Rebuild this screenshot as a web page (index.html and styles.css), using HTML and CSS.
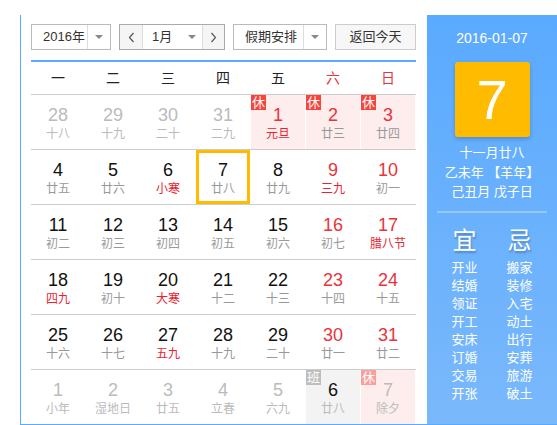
FILE: index.html
```html
<!DOCTYPE html>
<html lang="zh-CN">
<head>
<meta charset="utf-8">
<title>万年历</title>
<link rel="stylesheet" href="styles.css">
</head>
<body>
<div class="calendar">
  <div class="main">
    <div class="toolbar">
      <div class="select year"><span class="sel-text">2016年</span><span class="sel-arrow"><i class="tri"></i></span></div>
      <div class="month-group">
        <span class="nav prev"><svg width="7" height="11" viewBox="0 0 7 11"><polyline points="5.5,1 1.5,5.5 5.5,10" fill="none" stroke="#555" stroke-width="1.2"/></svg></span>
        <span class="month"><span class="month-text">1月</span><i class="tri"></i></span>
        <span class="nav next"><svg width="7" height="11" viewBox="0 0 7 11"><polyline points="1.5,1 5.5,5.5 1.5,10" fill="none" stroke="#555" stroke-width="1.2"/></svg></span>
      </div>
      <div class="select holiday"><span class="sel-text">假期安排</span><span class="sel-arrow"><i class="tri"></i></span></div>
      <span class="today">返回今天</span>
    </div>
    <div class="grid">
      <div class="week">
        <span>一</span><span>二</span><span>三</span><span>四</span><span>五</span><span class="red">六</span><span class="red">日</span>
      </div>
      <div class="row">
        <div class="cell out"><div class="num">28</div><div class="lunar">十八</div></div>
        <div class="cell out"><div class="num">29</div><div class="lunar">十九</div></div>
        <div class="cell out"><div class="num">30</div><div class="lunar">二十</div></div>
        <div class="cell out"><div class="num">31</div><div class="lunar">二九</div></div>
        <div class="cell hol wk"><span class="badge">休</span><div class="num">1</div><div class="lunar fest">元旦</div></div>
        <div class="cell hol wk"><span class="badge">休</span><div class="num">2</div><div class="lunar">廿三</div></div>
        <div class="cell hol wk"><span class="badge">休</span><div class="num">3</div><div class="lunar">廿四</div></div>
      </div>
      <div class="row">
        <div class="cell"><div class="num">4</div><div class="lunar">廿五</div></div>
        <div class="cell"><div class="num">5</div><div class="lunar">廿六</div></div>
        <div class="cell"><div class="num">6</div><div class="lunar fest">小寒</div></div>
        <div class="cell sel"><div class="num">7</div><div class="lunar">廿八</div></div>
        <div class="cell"><div class="num">8</div><div class="lunar">廿九</div></div>
        <div class="cell wk"><div class="num">9</div><div class="lunar fest">三九</div></div>
        <div class="cell wk"><div class="num">10</div><div class="lunar">初一</div></div>
      </div>
      <div class="row">
        <div class="cell"><div class="num">11</div><div class="lunar">初二</div></div>
        <div class="cell"><div class="num">12</div><div class="lunar">初三</div></div>
        <div class="cell"><div class="num">13</div><div class="lunar">初四</div></div>
        <div class="cell"><div class="num">14</div><div class="lunar">初五</div></div>
        <div class="cell"><div class="num">15</div><div class="lunar">初六</div></div>
        <div class="cell wk"><div class="num">16</div><div class="lunar">初七</div></div>
        <div class="cell wk"><div class="num">17</div><div class="lunar fest">腊八节</div></div>
      </div>
      <div class="row">
        <div class="cell"><div class="num">18</div><div class="lunar fest">四九</div></div>
        <div class="cell"><div class="num">19</div><div class="lunar">初十</div></div>
        <div class="cell"><div class="num">20</div><div class="lunar fest">大寒</div></div>
        <div class="cell"><div class="num">21</div><div class="lunar">十二</div></div>
        <div class="cell"><div class="num">22</div><div class="lunar">十三</div></div>
        <div class="cell wk"><div class="num">23</div><div class="lunar">十四</div></div>
        <div class="cell wk"><div class="num">24</div><div class="lunar">十五</div></div>
      </div>
      <div class="row">
        <div class="cell"><div class="num">25</div><div class="lunar">十六</div></div>
        <div class="cell"><div class="num">26</div><div class="lunar">十七</div></div>
        <div class="cell"><div class="num">27</div><div class="lunar fest">五九</div></div>
        <div class="cell"><div class="num">28</div><div class="lunar">十九</div></div>
        <div class="cell"><div class="num">29</div><div class="lunar">二十</div></div>
        <div class="cell wk"><div class="num">30</div><div class="lunar">廿一</div></div>
        <div class="cell wk"><div class="num">31</div><div class="lunar">廿二</div></div>
      </div>
      <div class="row">
        <div class="cell out"><div class="num">1</div><div class="lunar">小年</div></div>
        <div class="cell out"><div class="num">2</div><div class="lunar">湿地日</div></div>
        <div class="cell out"><div class="num">3</div><div class="lunar">廿五</div></div>
        <div class="cell out"><div class="num">4</div><div class="lunar">立春</div></div>
        <div class="cell out"><div class="num">5</div><div class="lunar">六九</div></div>
        <div class="cell out workday"><span class="badge ban">班</span><div class="num">6</div><div class="lunar">廿八</div></div>
        <div class="cell out hol"><span class="badge faded">休</span><div class="num">7</div><div class="lunar">除夕</div></div>
      </div>
    </div>
  </div>
  <div class="panel">
    <div class="pdate">2016-01-07</div>
    <div class="bigday">7</div>
    <div class="lunarinfo">
      <div>十一月廿八</div>
      <div>乙未年 【羊年】</div>
      <div>己丑月 戊子日</div>
    </div>
    <div class="divider"></div>
    <div class="yiji">
      <div class="col">
        <div class="yj-title">宜</div>
        <div>开业</div><div>结婚</div><div>领证</div><div>开工</div><div>安床</div><div>订婚</div><div>交易</div><div>开张</div>
      </div>
      <div class="col">
        <div class="yj-title">忌</div>
        <div>搬家</div><div>装修</div><div>入宅</div><div>动土</div><div>出行</div><div>安葬</div><div>旅游</div><div>破土</div>
      </div>
    </div>
  </div>
</div>
</body>
</html>
```

FILE: styles.css
```css
html, body {
  margin: 0;
  padding: 0;
  background: #fff;
  overflow: hidden;
}

body {
  font-family: "Liberation Sans", "Noto Sans CJK SC", sans-serif;
  color: #111;
}

.calendar {
  display: flex;
  margin: 15px 0 0 20px;
  width: 537px;
  height: 410px;
  box-sizing: border-box;
  border-left: 1px solid #5aabff;
  border-bottom: 1px solid #5aabff;
}

.main {
  width: 406px;
  padding: 9px 0 0 10px;
  box-sizing: border-box;
}

/* toolbar */
.toolbar {
  display: flex;
  gap: 8px;
  width: 385px;
  height: 26px;
  font-size: 13px;
  color: #333;
}

.select {
  display: flex;
  height: 26px;
  box-sizing: border-box;
  border: 1px solid #bbb;
  background: #fff;
  line-height: 24px;
}

.sel-text {
  padding-left: 11px;
  box-sizing: border-box;
  white-space: nowrap;
}

.sel-arrow {
  flex: 1;
  display: flex;
  align-items: center;
  justify-content: center;
  border-left: 1px solid #ddd;
}

.year { width: 80px; }
.year .sel-text { width: 55px; }

.holiday { width: 94px; }
.holiday .sel-text { width: 69px; }

.tri {
  display: block;
  width: 0;
  height: 0;
  border-left: 4px solid transparent;
  border-right: 4px solid transparent;
  border-top: 4px solid #888;
}

.month-group {
  display: flex;
  width: 106px;
  height: 26px;
  box-sizing: border-box;
  border: 1px solid #aaa;
  line-height: 24px;
}

.nav {
  width: 22px;
  display: flex;
  align-items: center;
  justify-content: center;
  background: #f5f5f5;
}

.prev { border-right: 1px solid #ddd; }
.next { border-left: 1px solid #ddd; width: 21px; }

.month {
  flex: 1;
  display: flex;
  align-items: center;
  padding: 0 6px 0 9px;
  justify-content: space-between;
  background: #fff;
}

.today {
  width: 81px;
  height: 26px;
  box-sizing: border-box;
  border: 1px solid #ccc;
  background: #f7f7f7;
  text-align: center;
  line-height: 24px;
}

/* grid */
.grid {
  margin-top: 10px;
  width: 385px;
  border-top: 2px solid #5aabff;
}

.week {
  display: grid;
  grid-template-columns: repeat(7, 55px);
  height: 33px;
  box-sizing: border-box;
  line-height: 32px;
  border-bottom: 1px solid #ccc;
  font-size: 14px;
  text-align: center;
  color: #222;
}

.week span { padding-right: 1px; }

.red { color: #e8333a; }

.row {
  display: grid;
  grid-template-columns: repeat(7, 55px);
  border-bottom: 1px solid #ccc;
}

.row:last-child { border-bottom: none; }

.cell {
  position: relative;
  height: 54px;
  margin-right: 1px;
  padding-top: 10px;
  box-sizing: border-box;
  text-align: center;
}

.num {
  font-size: 18px;
  line-height: 20px;
  color: #111;
}

.lunar {
  font-size: 12px;
  line-height: 18px;
  color: #999;
  white-space: nowrap;
}

.wk .num { color: #e8333a; }
.lunar.fest { color: #e8232f; }

.out .num, .out .lunar { color: #bbb; }
.workday .num { color: #111; }

.hol { background: #fdeded; }
.workday { background: #f3f3f3; }

.sel {
  border: 3px solid #ffbb00;
  padding-top: 7px;
}

.badge {
  position: absolute;
  top: 0;
  left: 0;
  width: 15px;
  height: 15px;
  line-height: 15px;
  font-size: 13px;
  color: #fff;
  background: #f5453d;
  text-align: center;
}

.badge.ban { background: #bdbdbd; }
.badge.faded { background: #f7a09c; }

/* right panel */
.panel {
  width: 130px;
  flex-shrink: 0;
  padding-top: 13px;
  box-sizing: border-box;
  background: linear-gradient(to bottom, #5aaaff, #7ab8fb);
  color: #fff;
  text-align: center;
}

.pdate {
  font-size: 14px;
  line-height: 20px;
}

.bigday {
  width: 75px;
  height: 75px;
  margin: 14px auto 0;
  background: #ffbb00;
  border-radius: 3px;
  box-shadow: 0 2px 4px rgba(0, 0, 0, 0.2);
  font-size: 56px;
  line-height: 75px;
}

.lunarinfo {
  margin-top: 6px;
  font-size: 13px;
  line-height: 19.5px;
  white-space: nowrap;
}

.divider {
  margin: 9px 10px 0;
  height: 2px;
  background: rgba(255, 255, 255, 0.3);
}

.yiji {
  display: grid;
  grid-template-columns: 55px 55px;
  margin: 0 10px;
  font-size: 13px;
  line-height: 18px;
}

.yj-title {
  margin: 13px 0 3px;
  font-size: 24px;
  line-height: 30px;
  text-shadow: 1px 2px 2px rgba(0, 0, 0, 0.25);
}
```
